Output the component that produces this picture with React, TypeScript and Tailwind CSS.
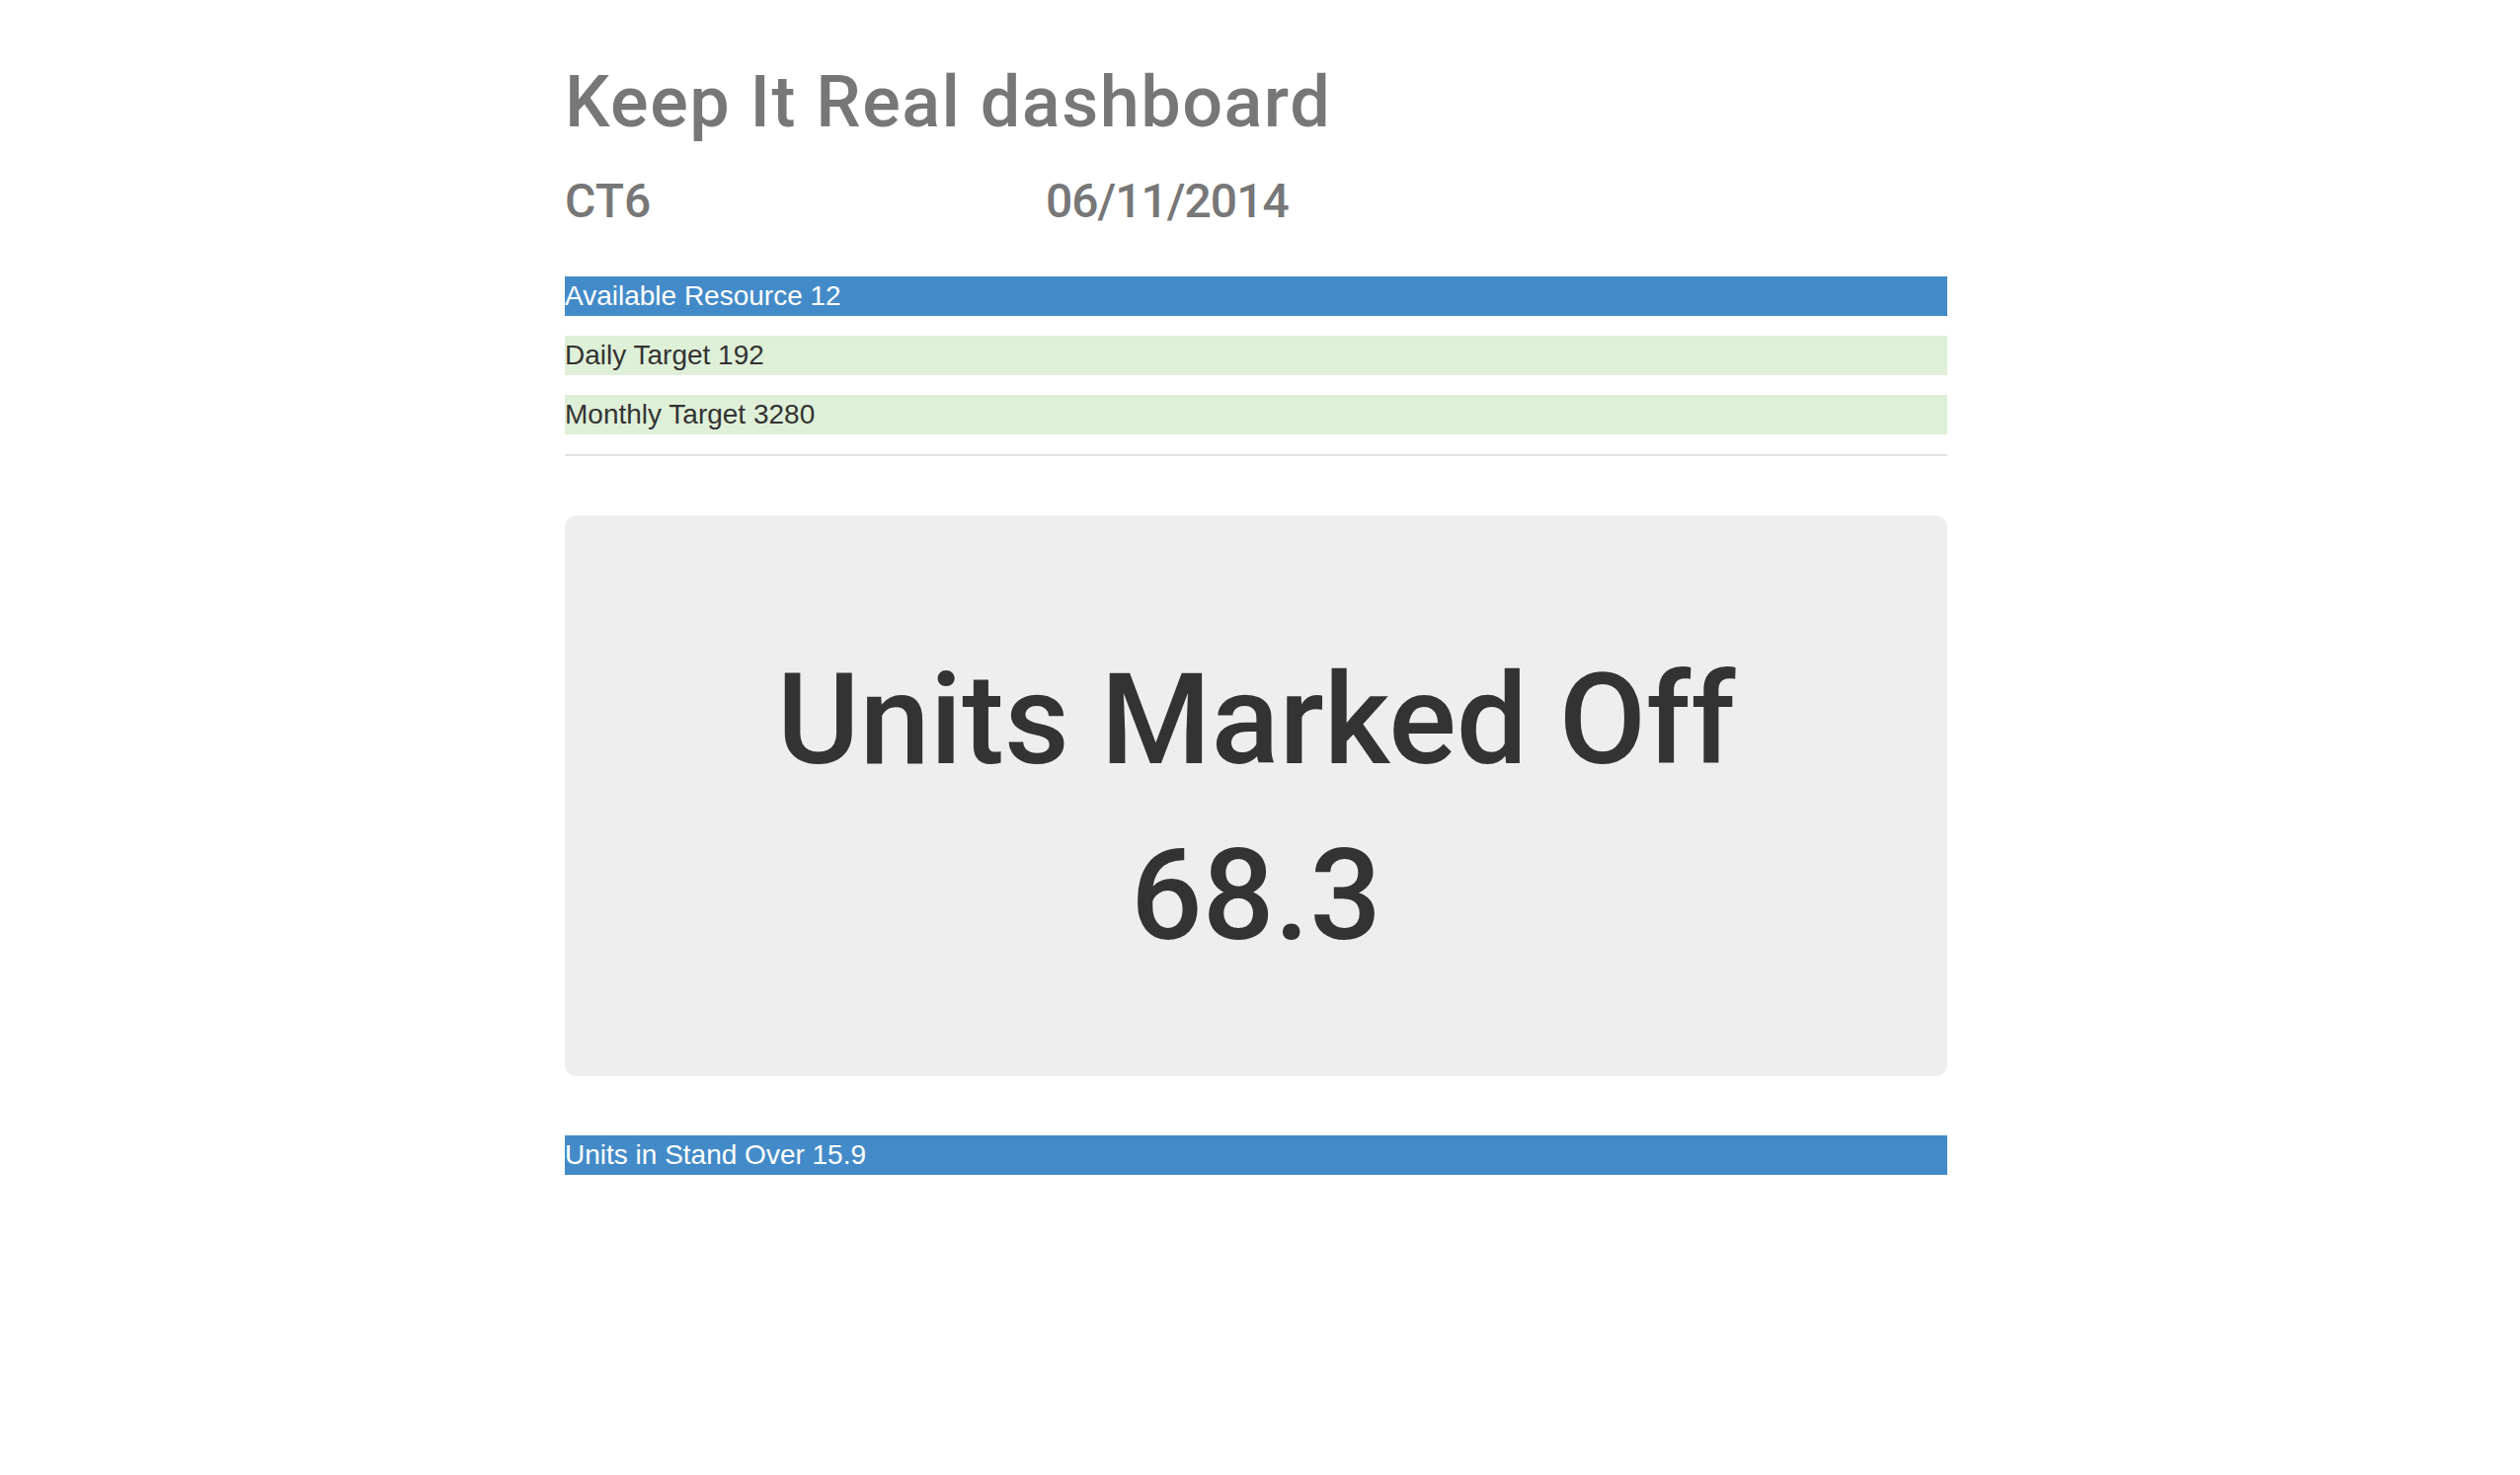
export default function App() {
  const stats = [
    { label: 'Available Resource', value: '12', tone: 'blue' },
    { label: 'Daily Target', value: '192', tone: 'green' },
    { label: 'Monthly Target', value: '3280', tone: 'green' },
  ];

  const heading = "font-['Roboto','Liberation_Sans',Arial,sans-serif] font-medium";

  return (
    <div className="min-h-screen bg-white font-['Liberation_Sans',Arial,sans-serif]">
      <div className="ml-[572px] w-[1400px] pb-[120px]">
        <h1 className={`${heading} mt-[64px] text-[72px] leading-[79px] tracking-[1.5px] text-[#777777] whitespace-nowrap`}>
          Keep It Real dashboard
        </h1>

        <div className={`${heading} mt-[34px] flex text-[48px] leading-[53px] text-[#777777]`}>
          <div className="w-[487px]">CT6</div>
          <div className="tracking-[-1px]">06/11/2014</div>
        </div>

        <div className="mt-[50px] flex flex-col gap-[20px]">
          {stats.map((s) => (
            <div
              key={s.label}
              className={
                s.tone === 'blue'
                  ? 'h-[40px] bg-[#438bc8] text-[28px] leading-[40px] text-white'
                  : 'h-[40px] bg-[#dff0d8] text-[28px] leading-[40px] text-[#333333]'
              }
            >
              {s.label} {s.value}
            </div>
          ))}
        </div>

        <hr className="mt-[20px] border-0 border-t-2 border-[#e3e3e3]" />

        <div className="mt-[60px] rounded-[12px] bg-[#eeeeee] pt-[137px] pb-[112px] text-center text-[#333333]">
          <div className={`${heading} text-[128px] leading-[141px]`}>Units Marked Off</div>
          <div className={`${heading} mt-[37px] text-[128px] leading-[141px]`}>68.3</div>
        </div>

        <div className="mt-[60px] h-[40px] bg-[#438bc8] text-[28px] leading-[40px] text-white">
          Units in Stand Over 15.9
        </div>
      </div>
    </div>
  );
}
